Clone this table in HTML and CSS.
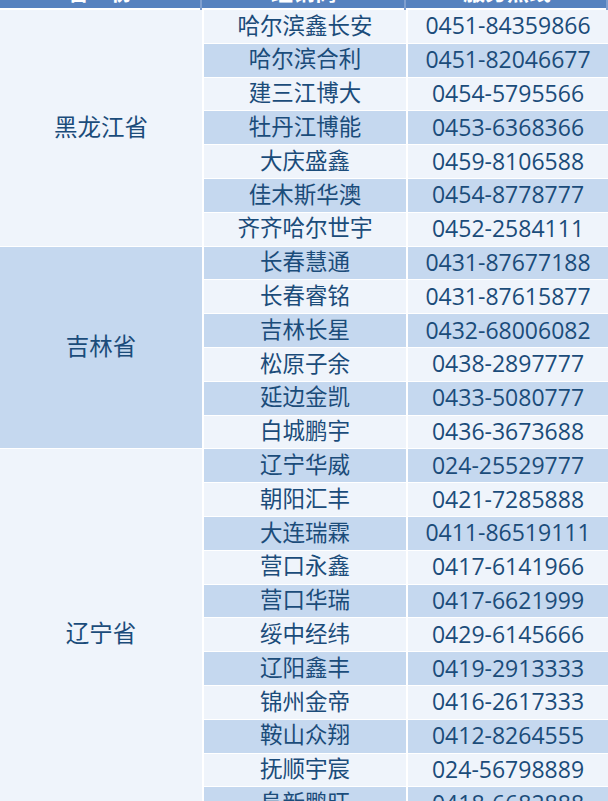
FILE: index.html
```html
<!DOCTYPE html>
<html lang="zh-CN">
<head>
<meta charset="utf-8">
<link rel="stylesheet" href="styles.css">
</head>
<body>
<div class="sheet">
  <div class="head">
    <div class="hcell">省　份</div>
    <div class="hcell">经销商</div>
    <div class="hcell">服务热线</div>
  </div>
  <div class="grid">
    <div class="prov light" style="grid-row: span 7">黑龙江省</div>
    <div class="c light">哈尔滨鑫长安</div><div class="c light num">0451-84359866</div>
    <div class="c dark">哈尔滨合利</div><div class="c dark num">0451-82046677</div>
    <div class="c light">建三江博大</div><div class="c light num">0454-5795566</div>
    <div class="c dark">牡丹江博能</div><div class="c dark num">0453-6368366</div>
    <div class="c light">大庆盛鑫</div><div class="c light num">0459-8106588</div>
    <div class="c dark">佳木斯华澳</div><div class="c dark num">0454-8778777</div>
    <div class="c light">齐齐哈尔世宇</div><div class="c light num">0452-2584111</div>

    <div class="prov dark" style="grid-row: span 6">吉林省</div>
    <div class="c dark">长春慧通</div><div class="c dark num">0431-87677188</div>
    <div class="c light">长春睿铭</div><div class="c light num">0431-87615877</div>
    <div class="c dark">吉林长星</div><div class="c dark num">0432-68006082</div>
    <div class="c light">松原子余</div><div class="c light num">0438-2897777</div>
    <div class="c dark">延边金凯</div><div class="c dark num">0433-5080777</div>
    <div class="c light">白城鹏宇</div><div class="c light num">0436-3673688</div>

    <div class="prov light" style="grid-row: span 11">辽宁省</div>
    <div class="c dark">辽宁华威</div><div class="c dark num">024-25529777</div>
    <div class="c light">朝阳汇丰</div><div class="c light num">0421-7285888</div>
    <div class="c dark">大连瑞霖</div><div class="c dark num">0411-86519111</div>
    <div class="c light">营口永鑫</div><div class="c light num">0417-6141966</div>
    <div class="c dark">营口华瑞</div><div class="c dark num">0417-6621999</div>
    <div class="c light">绥中经纬</div><div class="c light num">0429-6145666</div>
    <div class="c dark">辽阳鑫丰</div><div class="c dark num">0419-2913333</div>
    <div class="c light">锦州金帝</div><div class="c light num">0416-2617333</div>
    <div class="c dark">鞍山众翔</div><div class="c dark num">0412-8264555</div>
    <div class="c light">抚顺宇宸</div><div class="c light num">024-56798889</div>
    <div class="c dark">阜新鹏旺</div><div class="c dark num">0418-6682888</div>
  </div>
</div>
</body>
</html>
```
FILE: styles.css
```css
html, body {
  margin: 0;
  padding: 0;
  background: #ffffff;
  overflow: hidden;
}
.sheet {
  width: 608px;
  margin-top: -26px;
  font-family: "Open Sans", "Noto Sans CJK SC", sans-serif;
  color: #1b4c7a;
  font-size: 22.5px;
}
.head {
  display: grid;
  grid-template-columns: 202px 202px 1fr;
  column-gap: 2px;
  height: 34px;
  background: #5682bf;
  margin-bottom: 2px;
}
.hcell {
  display: flex;
  align-items: center;
  justify-content: center;
  color: #ffffff;
  font-weight: bold;
  font-size: 22px;
  padding-bottom: 6px;
  border-right: 2px solid #7f9fcf;
}
.grid {
  display: grid;
  grid-template-columns: 202px 202px 1fr;
  grid-auto-rows: 32.8px;
  column-gap: 2px;
  row-gap: 1px;
}
.c, .prov {
  display: flex;
  align-items: center;
  justify-content: center;
  white-space: nowrap;
  line-height: 1;
  padding-bottom: 1px;
}
.prov {
  grid-column: 1;
  font-size: 23.5px;
}
.light { background: #eff4fb; }
.dark { background: #c5d8ef; }
.num { font-size: 23px; }
```
